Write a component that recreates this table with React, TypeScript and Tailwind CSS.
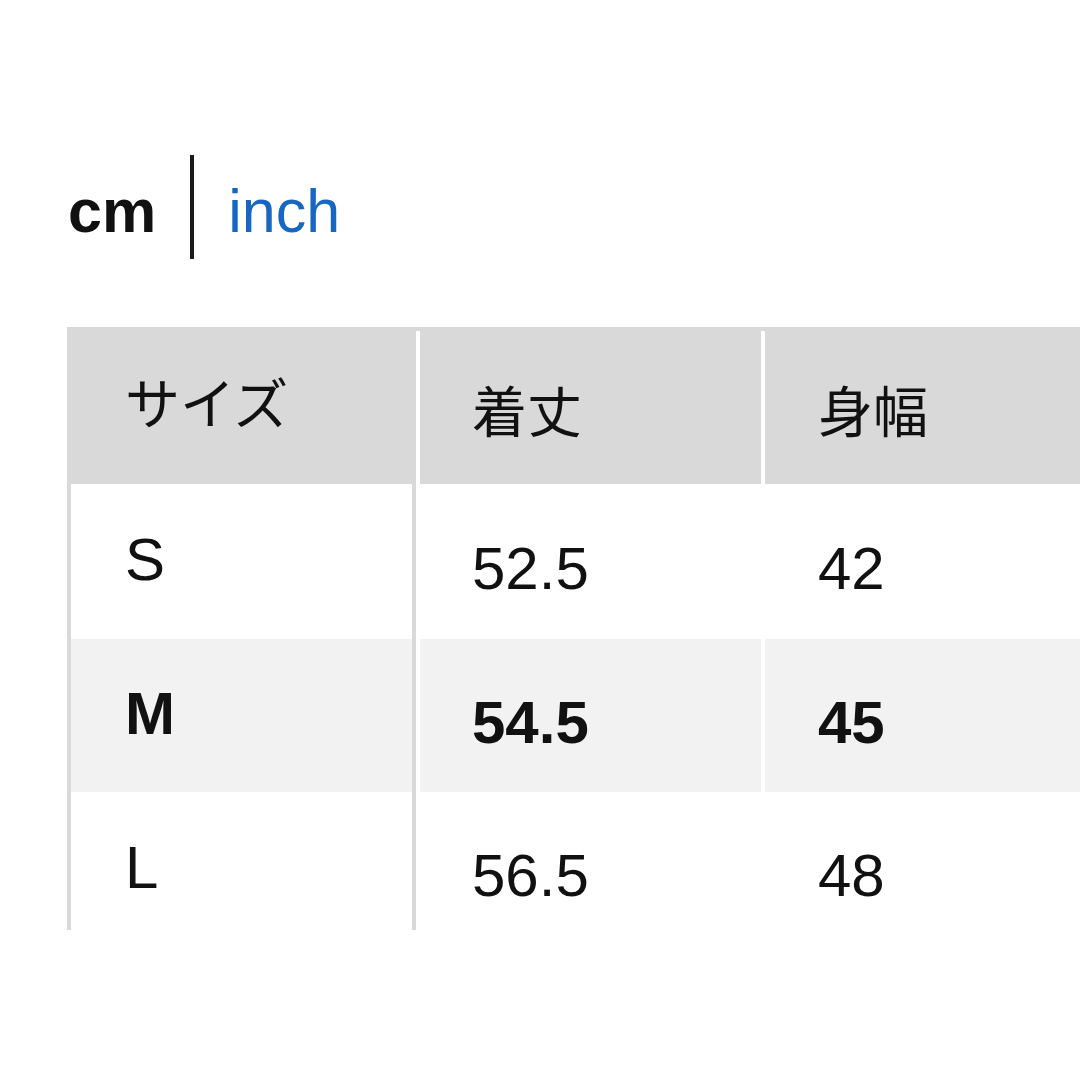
const sizeRows = [
  { size: "S", length: "52.5", width: "42", bold: false, height: "h-[155px]" },
  { size: "M", length: "54.5", width: "45", bold: true, height: "h-[153px]" },
  { size: "L", length: "56.5", width: "48", bold: false, height: "h-[154px]" },
];

const font = "font-['Liberation_Sans','Noto_Sans_CJK_JP',sans-serif]";

export default function App() {
  return (
    <div className={`min-h-[1080px] w-[1080px] overflow-hidden bg-white ${font} text-[#111]`}>
      {/* unit switch */}
      <div className="flex items-center pl-[68px] pt-[155px]">
        <span className="pt-2 text-[61px] font-bold leading-none">cm</span>
        <span className="mx-[34px] h-[104px] w-[4px] bg-[#1a1a1a]" />
        <span className="pt-2 text-[61px] leading-none text-[#1767c2]">inch</span>
      </div>

      {/* size table */}
      <div className="ml-[67px] mt-[68px]">
        <div className="bg-[#d9d9d9] pt-1">
          <div className="flex h-[153px] text-[55px] leading-none">
            <div className="flex w-[349px] items-center pl-[58px] pb-1">サイズ</div>
            <div className="w-1 bg-white" />
            <div className="flex w-[341px] items-center pl-[52px] pt-3">着丈</div>
            <div className="w-1 bg-white" />
            <div className="flex flex-1 items-center pl-[53px] pt-3">身幅</div>
          </div>
        </div>

        <div className="h-[446px] overflow-hidden">
          {sizeRows.map((row) => {
            const bg = row.bold ? "bg-[#f2f2f2]" : "bg-white";
            const weight = row.bold ? "font-bold" : "font-normal";
            return (
              <div key={row.size} className={`flex ${row.height} text-[60px] leading-none ${weight}`}>
                <div className={`flex w-[349px] items-center border-x-4 border-[#d9d9d9] pb-[3px] pl-[54px] ${bg}`}>
                  {row.size}
                </div>
                <div className="w-1 bg-white" />
                <div className={`flex w-[341px] items-center pl-[52px] pt-[14px] ${bg}`}>{row.length}</div>
                <div className="w-1 bg-white" />
                <div className={`flex flex-1 items-center pl-[53px] pt-[14px] ${bg}`}>{row.width}</div>
              </div>
            );
          })}
        </div>
      </div>
    </div>
  );
}
